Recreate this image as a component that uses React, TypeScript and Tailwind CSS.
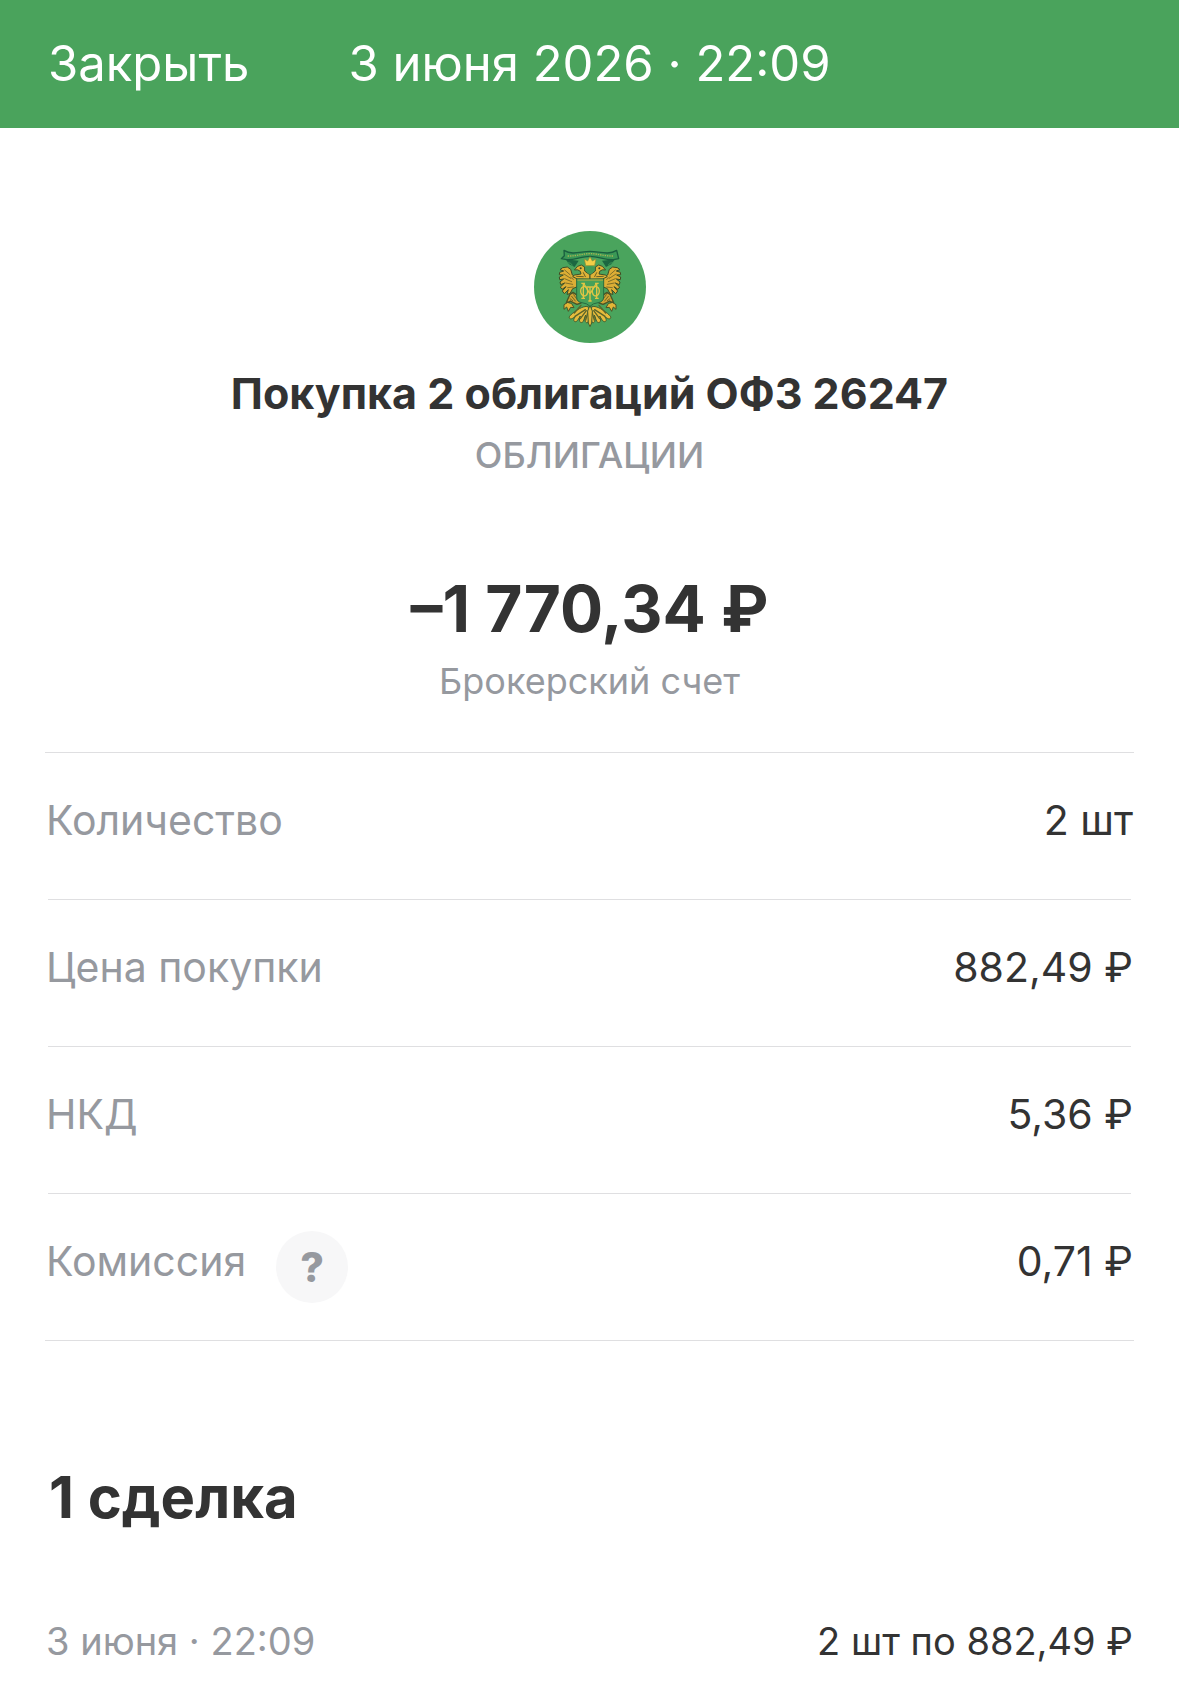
type Detail = {
    label: string;
    value: string;
    hint?: boolean;
};

const details: Detail[] = [
    { label: 'Количество', value: '2 шт' },
    { label: 'Цена покупки', value: '882,49 ₽' },
    { label: 'НКД', value: '5,36 ₽' },
    { label: 'Комиссия', value: '0,71 ₽', hint: true },
];

// Left half of the eagle, mirrored for the right one
function EagleHalf() {
    return (
        <g strokeLinejoin="round" strokeLinecap="round">
            {/* Wing */}
            <path
                d="M172 174 L157 165 L152 148 L142 141 L128 143 L120 149 L131 153 L119 157 L118 164 L130 165 L118 171 L119 179 L131 177 L120 186 L122 194 L134 189 L121 201 L126 208 L138 200 L127 213 L133 221 L145 209 L141 223 L150 221 L158 206 L172 200 Z"
                fill="#dcae35"
                stroke="#3f4c25"
                strokeWidth="3"
            />
            <path
                d="M134 150 L150 164 M132 162 L152 175 M134 176 L155 185 M137 189 L158 193 M143 203 L160 201 M152 172 L160 178"
                fill="none"
                stroke="#80702a"
                strokeWidth="3"
            />
            {/* Head and neck */}
            <path
                d="M164 149 L173 139 L184 135 L194 141 L194 153 L203 160 L210 164 L210 178 L172 177 L158 170 L164 165 L183 162 L181 154 L174 150 Z"
                fill="#dfb338"
                stroke="#3f4f28"
                strokeWidth="3"
            />
            <circle cx="182" cy="145" r="3" fill="#38472a" />
            <path d="M190 158 L196 170 M170 169 L190 170" stroke="#6b6025" strokeWidth="3" />
            {/* Leg */}
            <path
                d="M159 217 L150 223 L144 236 L139 248 L147 246 L151 243 L160 248 L171 253 L183 249 L178 239 L172 226 Z"
                fill="#cfa433"
                stroke="#4a5426"
                strokeWidth="4"
            />
            <path d="M155 229 L166 243 M161 224 L174 242 M150 236 L158 242" stroke="#716727" strokeWidth="3" />
            <path
                d="M142 248 L132 254 L132 268 L140 261 L145 274 L152 262 L162 263 L155 251 Z"
                fill="#e3b636"
                stroke="#4a5426"
                strokeWidth="3"
            />
            {/* Tail feathers */}
            <path
                d="M203 259 C188 258 170 269 151 286 C144 293 149 300 158 295 L166 290 C156 301 164 311 173 301 L181 288 C174 302 181 314 190 304 L197 285 C192 302 197 312 204 307 L209 285 Z"
                fill="#e6bb3c"
                stroke="#456030"
                strokeWidth="3"
            />
            <path
                d="M196 269 L165 289 M199 272 L181 296 M205 272 L197 300 M163 279 L183 256"
                fill="none"
                stroke="#5c6529"
                strokeWidth="4"
            />
        </g>
    );
}

function TreasuryEmblem() {
    return (
        <svg viewBox="42 33 336 336" className="size-28" role="img" aria-label="ОФЗ">
            <circle cx="210" cy="201" r="168" fill="#4aa45d" />

            {/* Ribbon */}
            <path d="M137 118 L147 133 L164 141 L176 122 Z M285 118 L274 133 L258 141 L246 122 Z" fill="#1c6741" />
            <path
                d="M132 91 C158 107 183 94 210 94 C237 94 264 107 290 91 L296 116 L281 119 C257 121 235 109 210 109 C184 109 163 121 140 119 L124 116 L133 107 Z"
                fill="#3b9856"
                stroke="#195f3f"
                strokeWidth="4"
                strokeLinejoin="round"
            />
            <path
                d="M143 108 C169 109 187 101 211 101 C234 101 253 109 280 108"
                fill="none"
                stroke="#a8b452"
                strokeWidth="4"
                strokeDasharray="4 3"
            />
            <path d="M142 128 Q152 127 158 136 M280 128 Q270 127 264 136" fill="none" stroke="#3b9856" strokeWidth="3" />

            <EagleHalf />
            <g transform="matrix(-1 0 0 1 420 0)">
                <EagleHalf />
            </g>

            {/* Central tail feather */}
            <path
                d="M210 256 L203 273 L205 309 L210 320 L215 309 L217 273 Z"
                fill="#e6bb3c"
                stroke="#456030"
                strokeWidth="3"
            />

            {/* Crown */}
            <path
                d="M197 137 L193 117 L203 123 L210 110 L217 123 L228 117 L224 137 Z"
                fill="#f2ce47"
                stroke="#8b8a34"
                strokeWidth="2"
            />
            <path d="M197 142 L210 138 L223 142 L221 155 L210 164 L199 155 Z" fill="#429b55" />

            {/* Shield */}
            <path
                d="M170 177 L251 177 L251 231 Q250 246 234 248 Q218 250 210 259 Q202 250 186 248 Q170 246 170 231 Z"
                fill="#46a159"
                stroke="#276c41"
                strokeWidth="3"
            />
            <path d="M172 180 H249" stroke="#c5b13e" strokeWidth="3" />

            {/* Monogram */}
            <g fill="none" stroke="#e0c544" strokeWidth="4">
                <path d="M190 190 V236 M184 190 H195 M184 235 H195 M230 190 V236 M225 190 H236 M225 235 H236" />
                <path d="M192 192 L210 222 L228 192 M210 200 V243 M200 201 H220 M205 243 H215" />
                <path d="M195 199 Q182 200 182 213 Q182 227 195 228 Q203 225 203 213 Q203 202 195 199 Z" />
                <path d="M225 199 Q238 200 238 213 Q238 227 225 228 Q217 225 217 213 Q217 202 225 199 Z" />
            </g>
        </svg>
    );
}

export default function App() {
    return (
        <div className="min-h-screen bg-white font-['Inter',sans-serif] text-[#333333]">
            <header className="grid h-32 grid-cols-[1fr_auto_1fr] items-center bg-[#4aa35c] px-12 text-[49px] leading-[64px] text-white">
                <button type="button" className="justify-self-start">
                    Закрыть
                </button>
                <time dateTime="2026-06-03T22:09">3 июня 2026 · 22:09</time>
            </header>

            <main className="px-[45px] pb-[34px]">
                <section className="flex flex-col items-center pt-[103px] pb-[47px] text-center">
                    <TreasuryEmblem />
                    <h1 className="mt-[22px] text-[43px] leading-[56px] font-bold">Покупка 2 облигаций ОФЗ 26247</h1>
                    <p className="mt-[10px] text-[36px] leading-[48px] font-medium text-[#96999f]">ОБЛИГАЦИИ</p>
                    <p className="mt-[90px] text-[64px] leading-[80px] font-bold">–1 770,34 ₽</p>
                    <p className="mt-2 text-[36px] leading-[48px] text-[#96999f]">Брокерский счет</p>
                </section>

                <dl className="border-y border-[#dfdfe1] text-[41px] leading-[56px]">
                    {details.map((item, i) => (
                        <div key={item.label} className={i > 0 ? 'mx-[3px] border-t border-[#dfdfe1]' : 'mx-[3px]'}>
                            <div className="-mx-[2px] flex h-[146px] items-center justify-between">
                                <dt className="flex items-center gap-[30px] text-[#96999f]">
                                    <span className="pb-3">{item.label}</span>
                                    {item.hint && (
                                        <button
                                            type="button"
                                            aria-label="О комиссии"
                                            className="flex size-[72px] items-center justify-center rounded-full bg-[#f7f7f8] font-extrabold"
                                        >
                                            ?
                                        </button>
                                    )}
                                </dt>
                                <dd className="pb-3">{item.value}</dd>
                            </div>
                        </div>
                    ))}
                </dl>

                <section className="px-px pt-[120px]">
                    <h2 className="px-[3px] text-[58px] leading-[72px] font-bold">1 сделка</h2>
                    <div className="mt-20 flex items-center justify-between text-[38px] leading-[56px]">
                        <time dateTime="2026-06-03T22:09" className="text-[#96999f]">
                            3 июня · 22:09
                        </time>
                        <span>2 шт по 882,49 ₽</span>
                    </div>
                </section>
            </main>
        </div>
    );
}
